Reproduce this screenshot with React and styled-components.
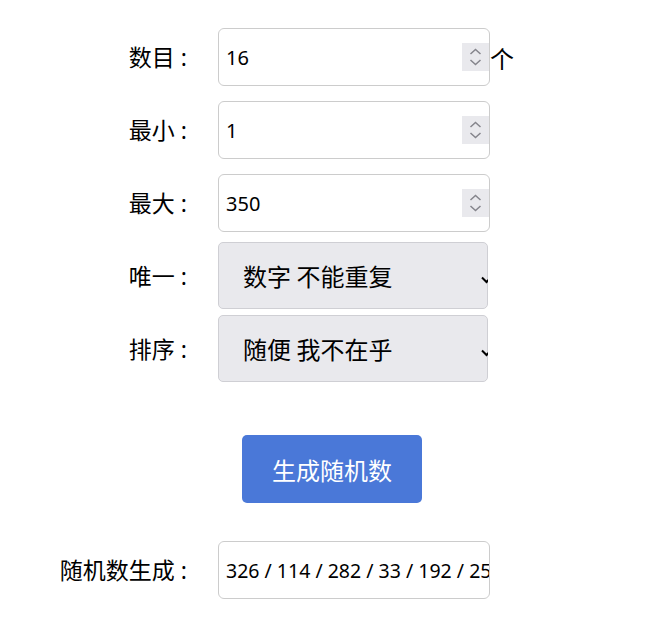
import React, { useState } from "react";
import styled, { createGlobalStyle } from "styled-components";

const GlobalStyle = createGlobalStyle`
  body {
    margin: 0;
    background: #ffffff;
    font-family: "Noto Sans CJK SC", "Noto Sans", sans-serif;
    color: #000;
  }
`;

const Page = styled.div`
  padding-top: 28px;
  width: 654px;
`;

const Row = styled.div`
  display: flex;
  align-items: center;
  gap: 30px;
  margin-bottom: ${(p) => p.$gap || 0}px;
`;

const Label = styled.label`
  width: 188px;
  text-align: right;
  font-size: 23px;
  line-height: 1;
  white-space: nowrap;
`;

const Colon = styled.span`
  font-family: "Noto Sans", sans-serif;
  margin-left: 6px;
  margin-right: 1px;
`;

const Field = styled.div`
  display: flex;
  align-items: center;
  box-sizing: border-box;
  width: 272px;
  height: 58px;
  border: 1px solid #cccccc;
  border-radius: 6px;
  background: #fff;
  overflow: hidden;
`;

const TextInput = styled.input`
  flex: 1;
  min-width: 0;
  height: 100%;
  border: none;
  outline: none;
  padding: 0 0 0 7px;
  background: transparent;
  font-family: "Noto Sans", "Noto Sans CJK SC", sans-serif;
  font-size: ${(p) => p.$size || 20}px;
  color: #000;
`;

const Spinner = styled.div`
  width: 27px;
  height: 28px;
  background: #e9e9ed;
  display: flex;
  align-items: center;
  justify-content: center;
  flex-shrink: 0;
`;

const Unit = styled.span`
  font-size: 24px;
  margin-left: -30px;
`;

const SelectWrap = styled.div`
  position: relative;
  width: 270px;
  height: 67px;
  overflow: hidden;
`;

const Select = styled.select`
  appearance: none;
  box-sizing: border-box;
  width: 100%;
  height: 100%;
  border: 1px solid #cfcfd4;
  border-radius: 5px;
  background: #e9e9ed;
  padding: 0 0 0 24px;
  font-family: "Noto Sans CJK SC", "Noto Sans", sans-serif;
  font-size: 24px;
  color: #000;
  outline: none;
`;

const Chevron = styled.svg`
  position: absolute;
  right: -3px;
  top: 34px;
  pointer-events: none;
`;

const ButtonRow = styled.div`
  padding-left: 242px;
  margin: 53px 0 38px;
`;

const Button = styled.button`
  width: 180px;
  height: 68px;
  border: none;
  border-radius: 5px;
  background: #4a78d8;
  color: #fff;
  font-family: "Noto Sans CJK SC", "Noto Sans", sans-serif;
  font-size: 24px;
  cursor: pointer;
`;

const SpinIcon = () => (
  <svg width="13" height="18" viewBox="0 0 13 18" fill="none">
    <path d="M1.5 6 L6.5 1.5 L11.5 6" stroke="#85858c" strokeWidth="1.5" />
    <path d="M1.5 12 L6.5 16.5 L11.5 12" stroke="#85858c" strokeWidth="1.5" />
  </svg>
);

const NumberField = ({ value, onChange }) => (
  <Field>
    <TextInput value={value} onChange={(e) => onChange(e.target.value)} />
    <Spinner>
      <SpinIcon />
    </Spinner>
  </Field>
);

const Dropdown = ({ options }) => (
  <SelectWrap>
    <Select>
      {options.map((o) => (
        <option key={o}>{o}</option>
      ))}
    </Select>
    <Chevron width="10" height="8" viewBox="0 0 10 8">
      <path d="M1 1.5 L5.5 6 L10 1.5" stroke="#000" strokeWidth="2" fill="none" />
    </Chevron>
  </SelectWrap>
);

const FieldLabel = ({ children }) => (
  <Label>
    {children}
    <Colon>:</Colon>
  </Label>
);

const App = () => {
  const [count, setCount] = useState("16");
  const [min, setMin] = useState("1");
  const [max, setMax] = useState("350");
  const result =
    "326 / 114 / 282 / 33 / 192 / 257 / 8 / 301 / 76 / 145 / 219 / 63 / 338 / 97 / 270 / 181";

  return (
    <Page>
      <GlobalStyle />
      <Row $gap={15}>
        <FieldLabel>数目</FieldLabel>
        <NumberField value={count} onChange={setCount} />
        <Unit>个</Unit>
      </Row>
      <Row $gap={15}>
        <FieldLabel>最小</FieldLabel>
        <NumberField value={min} onChange={setMin} />
      </Row>
      <Row $gap={10}>
        <FieldLabel>最大</FieldLabel>
        <NumberField value={max} onChange={setMax} />
      </Row>
      <Row $gap={6}>
        <FieldLabel>唯一</FieldLabel>
        <Dropdown options={["数字 不能重复", "数字 可以重复"]} />
      </Row>
      <Row>
        <FieldLabel>排序</FieldLabel>
        <Dropdown options={["随便 我不在乎", "从小到大", "从大到小"]} />
      </Row>
      <ButtonRow>
        <Button>生成随机数</Button>
      </ButtonRow>
      <Row>
        <FieldLabel>随机数生成</FieldLabel>
        <Field>
          <TextInput readOnly $size={19.5} value={result} />
        </Field>
      </Row>
    </Page>
  );
};

export default App;
